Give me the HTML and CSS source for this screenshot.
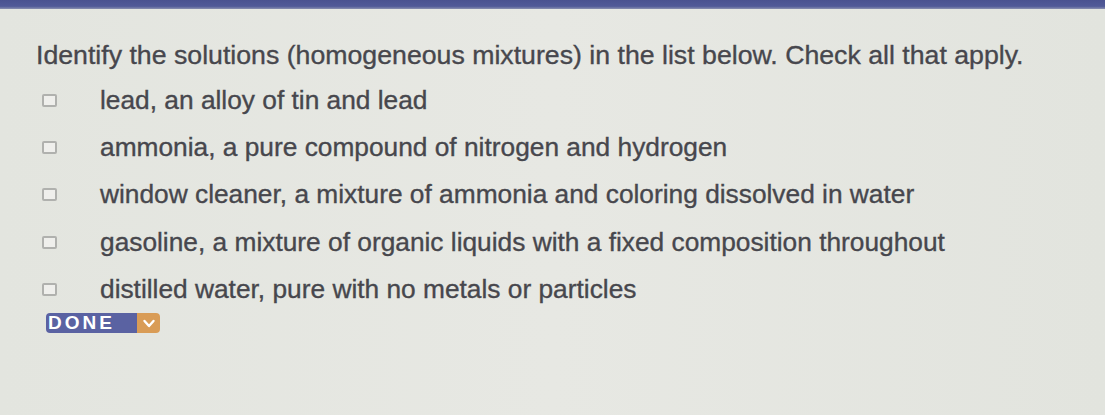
FILE: index.html
```html
<!DOCTYPE html>
<html>
<head>
<meta charset="utf-8">
<link rel="stylesheet" href="styles.css">
</head>
<body>
<div class="topbar"></div>
<main class="quiz">
  <h1 class="question">Identify the solutions (homogeneous mixtures) in the list below. Check all that apply.</h1>
  <ul class="options">
    <li class="option"><span class="box"></span><span class="label">lead, an alloy of tin and lead</span></li>
    <li class="option"><span class="box"></span><span class="label">ammonia, a pure compound of nitrogen and hydrogen</span></li>
    <li class="option"><span class="box"></span><span class="label">window cleaner, a mixture of ammonia and coloring dissolved in water</span></li>
    <li class="option"><span class="box"></span><span class="label">gasoline, a mixture of organic liquids with a fixed composition throughout</span></li>
    <li class="option"><span class="box"></span><span class="label">distilled water, pure with no metals or particles</span></li>
  </ul>
  <button class="done"><span class="done-text">DONE</span><span class="done-icon"><svg width="14" height="12" viewBox="0 0 14 12"><path d="M2.5 4 L7 9 L11.5 4" fill="none" stroke="#fff" stroke-width="2.4" stroke-linejoin="round" stroke-linecap="round"/></svg></span></button>
</main>
</body>
</html>
```
FILE: styles.css
```css
html, body {
  margin: 0;
  padding: 0;
}
body {
  width: 1105px;
  height: 415px;
  overflow: hidden;
  background: linear-gradient(90deg, #e3e5df 0%, #e7e8e3 50%, #e2e4de 100%);
  font-family: "Liberation Sans", Arial, sans-serif;
  color: #47474d;
  -webkit-text-stroke: 0.35px #47474d;
}
.topbar {
  height: 9px;
  background: linear-gradient(180deg, #4a5290 0%, #515a98 70%, #8a90b0 100%);
}
.quiz {
  display: flex;
  flex-direction: column;
  align-items: flex-start;
}
.question {
  margin: 30px 0 6px 36px;
  font-size: 26.7px;
  line-height: 32px;
  font-weight: normal;
}
.options {
  list-style: none;
  margin: 0;
  padding: 0;
}
.option {
  display: flex;
  align-items: center;
  height: 47.2px;
  font-size: 26.3px;
  padding-left: 42px;
}
.box {
  width: 11px;
  height: 9px;
  border: 2px solid #b0b1ae;
  border-radius: 2px;
  background: #efefec;
  margin-right: 43px;
  flex: none;
}
.done {
  display: flex;
  margin: 0 0 0 46px;
  padding: 0;
  border: none;
  height: 20px;
  border-radius: 4px;
  overflow: hidden;
  font-family: "Liberation Sans", Arial, sans-serif;
}
.done-text {
  width: 91px;
  background: #5a62a2;
  color: #fff;
  -webkit-text-stroke: 0;
  font-weight: bold;
  font-size: 19px;
  line-height: 20px;
  letter-spacing: 3px;
  text-align: left;
  padding-left: 2px;
  box-sizing: border-box;
}
.done-icon {
  width: 23px;
  background: #d99c56;
  display: flex;
  align-items: center;
  justify-content: center;
}
```
